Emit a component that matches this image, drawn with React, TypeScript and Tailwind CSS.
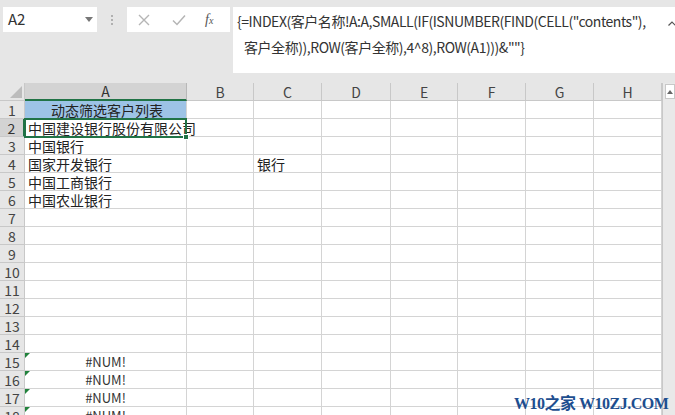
import React from 'react';

const cols = ['A', 'B', 'C', 'D', 'E', 'F', 'G', 'H'];

// cell contents keyed by row -> column
const cells: Record<number, Record<string, string>> = {
  1: { A: '动态筛选客户列表' },
  2: { A: '中国建设银行股份有限公司' },
  3: { A: '中国银行' },
  4: { A: '国家开发银行', C: '银行' },
  5: { A: '中国工商银行' },
  6: { A: '中国农业银行' },
  15: { A: '#NUM!' },
  16: { A: '#NUM!' },
  17: { A: '#NUM!' },
  18: { A: '#NUM!' },
};

const rows = Array.from({ length: 18 }, (_, i) => i + 1);

function ErrorMark() {
  return (
    <span className="absolute left-0 top-0 w-0 h-0 border-t-[5px] border-r-[5px] border-t-[#21823c] border-r-transparent" />
  );
}

export default function App() {
  return (
    <div
      className="relative w-[675px] h-[415px] overflow-hidden bg-[#e6e6e6] text-[#222]"
      style={{ fontFamily: '"Noto Sans CJK SC", "Noto Sans", sans-serif' }}
    >
      {/* Formula bar */}
      <div className="flex items-start h-[83px] pt-[7px] pl-[3px]">
        <div className="flex items-center justify-between w-[94px] h-[25px] bg-white pl-[5px] pr-[4px] text-[15px] text-[#333]">
          <span>A2</span>
          <svg width="8" height="5" viewBox="0 0 8 5">
            <path d="M0 0 L8 0 L4 5 Z" fill="#777" />
          </svg>
        </div>
        <div className="flex flex-col items-center justify-center w-[30px] h-[25px] gap-[2px]">
          <span className="w-[2px] h-[2px] bg-[#b0b0b0]" />
          <span className="w-[2px] h-[2px] bg-[#b0b0b0]" />
          <span className="w-[2px] h-[2px] bg-[#b0b0b0]" />
        </div>
        <div className="flex items-center w-[103px] h-[25px] bg-white">
          <svg width="12" height="12" viewBox="0 0 12 12" className="ml-[11px]">
            <path d="M1 1 L11 11 M11 1 L1 11" stroke="#b5b5b5" strokeWidth="1.4" />
          </svg>
          <svg width="14" height="12" viewBox="0 0 14 12" className="ml-[22px]">
            <path d="M1 6.5 L5 10.5 L13 1.5" stroke="#b5b5b5" strokeWidth="1.5" fill="none" />
          </svg>
          <span
            className="ml-[19px] text-[14px] italic text-[#555]"
            style={{ fontFamily: '"Liberation Serif", serif' }}
          >
            f<span className="text-[10px]">x</span>
          </span>
        </div>
        <div className="relative ml-[3px] flex-1 h-[66px] bg-white pl-[4px] pt-[1px] text-[14px] leading-[26px] text-[#333]">
          <div className="whitespace-nowrap tracking-[-0.45px]">
            {'{=INDEX(客户名称!A:A,SMALL(IF(ISNUMBER(FIND(CELL("contents"),'}
          </div>
          <div className="whitespace-nowrap pl-[7px] tracking-[-0.45px]">
            {'客户全称)),ROW(客户全称),4^8),ROW(A1)))&""}'}
          </div>
          <svg width="8" height="5" viewBox="0 0 8 5" className="absolute right-[-1px] top-[14px]">
            <path d="M0.5 4.5 L4 1 L7.5 4.5" stroke="#555" strokeWidth="1.2" fill="none" />
          </svg>
        </div>
      </div>

      {/* Sheet */}
      <div className="flex">
        <div
          className="grid bg-white text-[14px]"
          style={{ gridTemplateColumns: '25px 162px 67px 68px 69px 67px 68px 68px 68px' }}
        >
          {/* header row */}
          <div className="relative h-[18px] bg-[#e6e6e6] border-r border-b border-[#c8c8c8]">
            <svg width="12" height="12" viewBox="0 0 12 12" className="absolute right-[2px] bottom-[2px]">
              <path d="M12 0 L12 12 L0 12 Z" fill="#bcbcbc" />
            </svg>
          </div>
          {cols.map((c) => (
            <div
              key={c}
              className={
                c === 'A'
                  ? 'h-[18px] flex items-center justify-center bg-[#d3d3d3] border-r border-[#b8b8b8] border-b-2 border-b-[#217346] text-[#333] leading-none'
                  : 'h-[18px] flex items-center justify-center bg-[#e6e6e6] border-r border-b border-[#c8c8c8] text-[#444] leading-none'
              }
            >
              {c}
            </div>
          ))}

          {rows.map((r) => (
            <React.Fragment key={r}>
              <div
                className={
                  r === 2
                    ? 'h-[18px] flex items-center justify-center bg-[#d3d3d3] border-r-2 border-r-[#217346] border-b border-b-[#c8c8c8] text-[#333] leading-none'
                    : 'h-[18px] flex items-center justify-center bg-[#e6e6e6] border-r border-b border-[#c8c8c8] text-[#444] leading-none'
                }
              >
                {r}
              </div>
              {cols.map((c) => {
                const v = cells[r]?.[c];
                const isA1 = r === 1 && c === 'A';
                const isErr = v === '#NUM!';
                return (
                  <div
                    key={c}
                    className={
                      (isA1 ? 'bg-[#9dc3e6] justify-center ' : isErr ? 'justify-center ' : 'justify-start ') +
                      'relative h-[18px] flex items-center border-r border-b border-[#d4d4d4] pl-[3px] whitespace-nowrap leading-none text-[#222]'
                    }
                  >
                    {isErr && <ErrorMark />}
                    {v && <span className={isErr ? 'text-[13px] text-[#333] pr-[3px]' : 'relative z-10'}>{v}</span>}
                    {r === 2 && c === 'A' && (
                      <span className="absolute -left-[1px] -top-[1px] w-[163px] h-[20px] border-2 border-[#217346] z-20">
                        <span className="absolute -right-[4px] -bottom-[4px] w-[6px] h-[6px] bg-[#217346] border border-white" />
                      </span>
                    )}
                  </div>
                );
              })}
            </React.Fragment>
          ))}
        </div>

        {/* vertical scrollbar */}
        <div className="flex-1 border-l border-[#c8c8c8] bg-[#e9e9e9] pl-[2px]">
          <div className="flex items-center justify-center h-[15px] bg-white border border-[#c8c8c8] mt-[1px]">
            <svg width="6" height="4" viewBox="0 0 6 4">
              <path d="M0 4 L3 0 L6 4 Z" fill="#666" />
            </svg>
          </div>
        </div>
      </div>

      {/* watermark */}
      <div
        className="absolute left-[514px] top-[396px] text-[16px] tracking-[-0.5px] font-bold text-[#1d4e8f] whitespace-nowrap leading-none"
        style={{ fontFamily: '"Liberation Serif", "Noto Sans CJK SC", serif' }}
      >
        W10之家 W10ZJ.COM
      </div>
    </div>
  );
}
